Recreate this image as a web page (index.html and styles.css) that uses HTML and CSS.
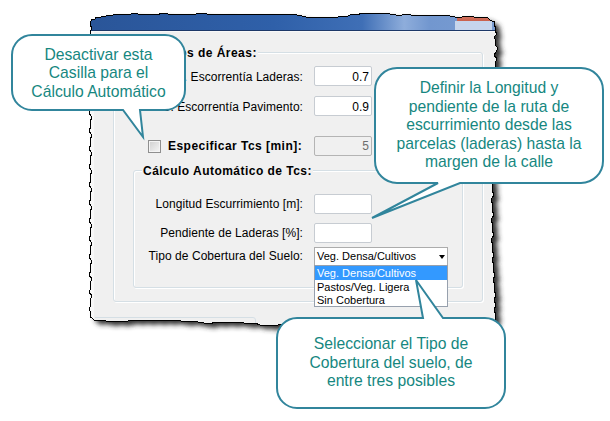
FILE: index.html
```html
<!DOCTYPE html>
<html lang="es">
<head>
<meta charset="utf-8">
<title>Cálculo de Tcs</title>
<link rel="stylesheet" href="styles.css">
</head>
<body>
<div class="canvas">
  <svg class="frame" width="610" height="421" viewBox="0 0 610 421">
    <defs>
      <path id="edge" d="M 91 21 L 92 19 L 95 19 L 96 17 L 100 18 L 102 16 L 106 16 L 108 15 L 113 15 L 115 14 L 121 15 L 124 14 L 129 15 L 133 13 L 138 14 L 144 14 L 147 15 L 152 14 L 157 15 L 162 13 L 168 14 L 175 14 L 179 15 L 185 14 L 190 15 L 196 14 L 201 13 L 207 14 L 214 14 L 218 15 L 224 14 L 231 14 L 236 15 L 242 14 L 249 15 L 255 14 L 260 15 L 267 14 L 273 15 L 279 14 L 285 15 L 291 14 L 297 15 L 302 16 L 306 17 L 311 18 L 317 17 L 322 18 L 327 17 L 333 18 L 338 17 L 343 16 L 348 16 L 352 14 L 357 15 L 362 13 L 368 14 L 374 13 L 379 14 L 385 13 L 390 14 L 396 15 L 402 15 L 408 14 L 414 16 L 420 15 L 426 16 L 432 15 L 438 16 L 444 15 L 450 16 L 455 17 L 462 17 L 466 16 L 470 16 L 474 17 L 480 17 L 484 17 L 488 18 L 490 20 L 492 21 L 495 22 L 494 25 L 496 28 L 495 31 L 497 34 L 494 37 L 496 41 L 495 45 L 498 48 L 496 52 L 494 55 L 497 59 L 495 63 L 496 67 L 494 71 L 497 75 L 495 80 L 496 85 L 494 90 L 497 95 L 495 100 L 496 105 L 493 110 L 496 115 L 494 120 L 497 125 L 495 130 L 496 135 L 493 140 L 495 145 L 494 150 L 496 155 L 493 160 L 495 165 L 492 170 L 494 175 L 491 180 L 493 185 L 492 190 L 494 195 L 491 200 L 493 205 L 492 210 L 494 215 L 491 220 L 493 225 L 492 230 L 494 235 L 491 240 L 493 245 L 492 250 L 494 255 L 492 260 L 494 265 L 493 270 L 495 275 L 493 280 L 495 285 L 494 290 L 496 295 L 494 300 L 496 305 L 494 310 L 496 315 L 495 320 L 494 324 L 488 325 L 482 324 L 476 326 L 470 325 L 464 326 L 458 324 L 452 325 L 446 326 L 440 325 L 434 324 L 428 326 L 422 325 L 416 324 L 410 326 L 404 325 L 398 324 L 392 326 L 386 325 L 380 324 L 374 325 L 368 326 L 362 325 L 356 324 L 350 325 L 344 326 L 338 325 L 332 324 L 326 325 L 320 326 L 314 325 L 308 324 L 302 325 L 296 326 L 290 325 L 284 324 L 278 325 L 272 326 L 266 325 L 260 325 L 255 323 L 250 324 L 244 323 L 238 322 L 233 323 L 227 322 L 221 323 L 215 322 L 210 324 L 204 323 L 198 322 L 193 321 L 187 322 L 181 321 L 175 320 L 170 321 L 165 320 L 160 321 L 154 320 L 149 321 L 143 320 L 138 321 L 133 320 L 128 321 L 123 322 L 117 321 L 111 322 L 106 321 L 101 320 L 97 321 L 94 320 L 92 318 L 90 317 L 91 313 L 89 309 L 91 305 L 90 300 L 92 296 L 89 292 L 91 288 L 90 283 L 92 279 L 89 275 L 91 270 L 90 266 L 92 261 L 89 257 L 91 252 L 90 248 L 92 243 L 89 239 L 91 234 L 90 230 L 92 225 L 89 221 L 91 216 L 90 212 L 92 207 L 89 203 L 91 198 L 90 194 L 92 189 L 89 185 L 91 180 L 90 176 L 92 171 L 89 167 L 91 162 L 90 158 L 92 153 L 89 149 L 91 144 L 90 140 L 92 135 L 89 131 L 91 126 L 90 122 L 92 117 L 89 113 L 91 108 L 90 104 L 92 99 L 89 95 L 91 90 L 90 86 L 92 81 L 89 77 L 91 72 L 90 68 L 92 63 L 89 59 L 91 54 L 90 50 L 92 45 L 89 41 L 91 36 L 90 32 L 92 28 L 90 25 Z"/>
      <clipPath id="winclip"><use href="#edge"/></clipPath>
      <filter id="shadow" x="-10%" y="-10%" width="120%" height="120%">
        <feGaussianBlur stdDeviation="2.4"/>
      </filter>
      <linearGradient id="titlegrad" x1="0" y1="0" x2="1" y2="0">
        <stop offset="0" stop-color="#2a5598"/>
        <stop offset="0.45" stop-color="#2f60a9"/>
        <stop offset="0.66" stop-color="#3f6fb6"/>
        <stop offset="0.76" stop-color="#8eaddb"/>
        <stop offset="0.82" stop-color="#7297cf"/>
        <stop offset="1" stop-color="#7a9dd2"/>
      </linearGradient>
      <linearGradient id="closegrad" x1="0" y1="0" x2="0" y2="1">
        <stop offset="0" stop-color="#e79a86"/>
        <stop offset="1" stop-color="#c9604c"/>
      </linearGradient>
    </defs>
    <use href="#edge" class="win-shadow" transform="translate(5 4)" filter="url(#shadow)"/>
    <use href="#edge" class="win-body"/>
    <g clip-path="url(#winclip)">
      <rect x="85" y="8" width="420" height="22" fill="url(#titlegrad)"/>
      <rect x="457" y="8" width="33" height="13" fill="url(#closegrad)"/>
      <rect x="455" y="21" width="37" height="9" class="cap-light"/>
      <rect x="85" y="30" width="420" height="1" class="cap-line"/>
      <rect x="85" y="31" width="420" height="1" class="cap-hl"/>
      <rect x="86" y="31" width="8" height="300" class="left-hl"/>
      <path d="M 95 317.5 H 253 Q 255.5 317.5 255.5 320 V 330" class="bottom-line"/>
    </g>
    <use href="#edge" class="win-edge"/>
  </svg>

  <div class="window">
    <div class="gb gb-outer">
      <div class="legend legend-outer">Tipos de Áreas:</div>
      <div class="row r1">
        <div class="lbl lo">C. Escorrentía Laderas:</div>
        <div class="tb lo">0.7</div>
      </div>
      <div class="row r2">
        <div class="lbl lo">C. Escorrentía Pavimento:</div>
        <div class="tb lo">0.9</div>
      </div>
      <div class="row r3">
        <div class="lbl chk">
          <span class="cb"></span>
          <span class="chk-text">Especificar Tcs [min]:</span>
        </div>
        <div class="tb disabled">5</div>
      </div>
      <div class="gb gb-inner">
        <div class="legend">Cálculo Automático de Tcs:</div>
        <div class="row r4">
          <div class="lbl">Longitud Escurrimiento [m]:</div>
          <div class="tb"></div>
        </div>
        <div class="row r5">
          <div class="lbl">Pendiente de Laderas [%]:</div>
          <div class="tb"></div>
        </div>
        <div class="row r6">
          <div class="lbl">Tipo de Cobertura del Suelo:</div>
          <div class="combo">
            <span class="combo-text">Veg. Densa/Cultivos</span>
            <span class="arrow"></span>
            <div class="list">
              <div class="opt sel">Veg. Densa/Cultivos</div>
              <div class="opt">Pastos/Veg. Ligera</div>
              <div class="opt">Sin Cobertura</div>
            </div>
          </div>
        </div>
      </div>
    </div>
  </div>

  <svg class="bubbles" width="610" height="421" viewBox="0 0 610 421">
    <path class="bubble" d="M 32 35 H 165 A 20 20 0 0 1 185 55 V 90 A 20 20 0 0 1 165 110 H 140 L 143 137 L 123 110 H 32 A 20 20 0 0 1 12 90 V 55 A 20 20 0 0 1 32 35 Z"/>
    <path class="bubble" d="M 397 68 H 581 A 22 22 0 0 1 603 90 V 161 A 22 22 0 0 1 581 183 H 460 L 372 218 L 438 183 H 397 A 22 22 0 0 1 375 161 V 90 A 22 22 0 0 1 397 68 Z"/>
    <path class="bubble" d="M 297 318 H 423 L 416 280 L 443 318 H 485 A 20 20 0 0 1 505 338 V 388 A 20 20 0 0 1 485 408 H 297 A 20 20 0 0 1 277 388 V 338 A 20 20 0 0 1 297 318 Z"/>
  </svg>

  <div class="note note-1">Desactivar esta<br>Casilla para el<br>Cálculo Automático</div>
  <div class="note note-2">Definir la Longitud y<br>pendiente de la ruta de<br>escurrimiento desde las<br>parcelas (laderas) hasta la<br>margen de la calle</div>
  <div class="note note-3">Seleccionar el Tipo de<br>Cobertura del suelo, de<br>entre tres posibles</div>
</div>
</body>
</html>
```

FILE: styles.css
```css
html, body {
  margin: 0;
  padding: 0;
  background: #ffffff;
}

.canvas {
  position: relative;
  width: 610px;
  height: 421px;
  overflow: hidden;
  background: #ffffff;
  font-family: "Liberation Sans", Arial, sans-serif;
}

/* ---------- torn window frame ---------- */
.frame {
  position: absolute;
  left: 0;
  top: 0;
}

.win-shadow { fill: #333333; }
.win-body { fill: #f0f0f0; }
.win-edge {
  fill: none;
  stroke: #000000;
  stroke-width: 1;
  shape-rendering: crispEdges;
}
.cap-light { fill: #c6d5ec; }
.cap-line { fill: #1d3868; }
.cap-hl { fill: #f8f8f8; }
.left-hl { fill: #f8f8f8; }
.bottom-line {
  fill: none;
  stroke: #d5dfe5;
  stroke-width: 1;
}

/* ---------- window content ---------- */
.window {
  position: absolute;
  left: 90px;
  top: 32px;
  width: 407px;
  height: 290px;
  font-size: 12px;
  color: #000000;
}

.gb {
  display: flex;
  flex-direction: column;
  border: 1px solid #d5dfe5;
  border-radius: 3px;
  box-shadow: inset 1px 1px 0 #ffffff, 1px 1px 0 #ffffff;
}

.gb-outer {
  box-sizing: border-box;
  width: 370px;
  margin: 20px 0 0 23px;
  padding-bottom: 13px;
}

.gb-inner {
  margin: 14px 19px 0;
  padding-bottom: 21px;
}

.legend {
  align-self: flex-start;
  height: 13px;
  line-height: 13px;
  margin: -6px 0 0 8px;
  padding: 0 1px;
  font-weight: bold;
  letter-spacing: 0.47px;
  background: #f0f0f0;
  white-space: nowrap;
}

.legend-outer { margin-left: 45px; }

.row {
  display: flex;
  align-items: center;
  height: 20px;
}

.r1 { margin-top: 6px; }
.r2 { margin-top: 10px; }
.r3 { margin-top: 20px; }
.r4 { margin-top: 16px; }
.r5 { margin-top: 9px; }
.r6 { margin-top: 4px; height: 19px; }

.lbl {
  flex: none;
  width: 189px;
  line-height: 13px;
  text-align: right;
  letter-spacing: 0.05px;
  white-space: nowrap;
}

.gb-inner .lbl { width: 169px; }

.lo { padding-top: 3px; }

.chk {
  box-sizing: border-box;
  display: flex;
  align-items: center;
  padding-left: 34px;
  text-align: left;
}

.cb {
  flex: none;
  box-sizing: border-box;
  width: 13px;
  height: 13px;
  border: 1px solid #8f8f8f;
  background: linear-gradient(135deg, #cfcfcf 0%, #f6f6f6 100%);
  box-shadow: inset 0 0 0 1px #f4f4f4;
}

.chk-text {
  margin-left: 7px;
  padding-top: 1px;
  font-weight: bold;
  letter-spacing: 0.47px;
}

.tb {
  flex: none;
  box-sizing: border-box;
  display: flex;
  align-items: center;
  justify-content: flex-end;
  width: 58px;
  height: 20px;
  margin-left: 11px;
  padding-right: 2px;
  border: 1px solid #c7ccd2;
  border-radius: 2px;
  background: #ffffff;
  line-height: 13px;
}

.tb.lo { padding-top: 3px; }

.tb.disabled {
  background: #f0f0f0;
  border-color: #b4b4b4;
  color: #6d6d6d;
}

.combo {
  position: relative;
  flex: none;
  box-sizing: border-box;
  display: flex;
  align-items: center;
  width: 134px;
  height: 19px;
  margin-left: 11px;
  padding-left: 2px;
  border: 1px solid #acacac;
  background: #ffffff;
  font-size: 11px;
  line-height: 13px;
}

.combo-text { white-space: nowrap; }

.arrow {
  width: 0;
  height: 0;
  margin-left: auto;
  margin-right: 2px;
  border-top: 4px solid #000000;
  border-left: 3.5px solid transparent;
  border-right: 3.5px solid transparent;
}

.list {
  position: absolute;
  top: 100%;
  left: -1px;
  width: 134px;
  box-sizing: border-box;
  border: 1px solid #97a0ad;
  background: #ffffff;
}

.opt {
  height: 14px;
  line-height: 14px;
  padding-left: 2px;
  white-space: nowrap;
}

.opt:last-child {
  height: 12px;
  line-height: 12px;
}

.opt.sel {
  background: #3399ff;
  color: #ffffff;
}

/* ---------- callouts ---------- */
.bubbles {
  position: absolute;
  left: 0;
  top: 0;
}

.bubble {
  fill: #ffffff;
  stroke: #31859c;
  stroke-width: 2;
}

.note {
  position: absolute;
  display: flex;
  align-items: center;
  justify-content: center;
  text-align: center;
  white-space: nowrap;
  font-size: 15.7px;
  line-height: 18.5px;
  color: #16877f;
}

.note-1 { left: 12px; top: 36px; width: 173px; height: 75px; }
.note-2 { left: 375px; top: 68px; width: 228px; height: 115px; }
.note-3 { left: 277px; top: 318px; width: 228px; height: 90px; }
```
